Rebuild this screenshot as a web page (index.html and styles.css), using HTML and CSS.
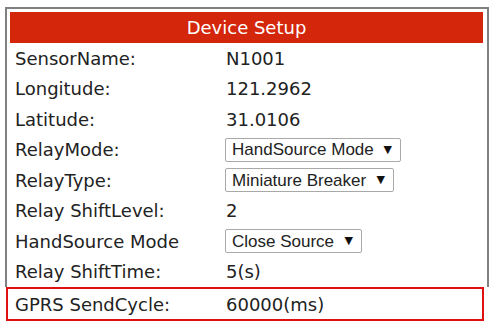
FILE: index.html
```html
<!DOCTYPE html>
<html lang="en">
<head>
  <meta charset="UTF-8" />
  <title>Device Setup</title>
  <link rel="stylesheet" href="styles.css">
</head>
<body>
  <div class="setup">
    <div class="setup__head">Device Setup</div>
    <div class="setup__row">
      <span class="setup__label">SensorName:</span>
      <span class="setup__value">N1001</span>
    </div>
    <div class="setup__row">
      <span class="setup__label">Longitude:</span>
      <span class="setup__value">121.2962</span>
    </div>
    <div class="setup__row">
      <span class="setup__label">Latitude:</span>
      <span class="setup__value">31.0106</span>
    </div>
    <div class="setup__row">
      <span class="setup__label">RelayMode:</span>
      <span class="setup__value">
        <span class="picker">
          <select class="picker__select">
            <option>HandSource Mode</option>
          </select>
        </span>
      </span>
    </div>
    <div class="setup__row">
      <span class="setup__label">RelayType:</span>
      <span class="setup__value">
        <span class="picker">
          <select class="picker__select">
            <option>Miniature Breaker</option>
          </select>
        </span>
      </span>
    </div>
    <div class="setup__row">
      <span class="setup__label">Relay ShiftLevel:</span>
      <span class="setup__value">2</span>
    </div>
    <div class="setup__row">
      <span class="setup__label">HandSource Mode</span>
      <span class="setup__value">
        <span class="picker">
          <select class="picker__select">
            <option>Close Source</option>
          </select>
        </span>
      </span>
    </div>
    <div class="setup__row">
      <span class="setup__label">Relay ShiftTime:</span>
      <span class="setup__value">5(s)</span>
    </div>
  </div>
  <!-- marked row -->
  <div class="setup__row setup__row--marked">
    <span class="setup__label">GPRS SendCycle:</span>
    <span class="setup__value">60000(ms)</span>
  </div>
</body>
</html>
```

FILE: styles.css
```css
body {
  margin: 0;
  background: #fff;
  color: #222;
  font-family: 'DejaVu Sans', Verdana, sans-serif;
  font-size: 18px;
}
.setup {
  margin: 7px 0 0 5px;
  width: 473px;
  padding: 3px 4px 0 3px;
  border: 2px solid #808080;
  border-bottom: none;
}
.setup__head {
  height: 31px;
  display: flex;
  align-items: center;
  justify-content: center;
  background: #d4260a;
  color: #fff;
  font-size: 18px;
}
.setup__row {
  height: 30.5px;
  display: flex;
  align-items: center;
  padding-left: 5px;
}
.setup__label {
  width: 211px;
}
.setup__value {
  display: flex;
  align-items: center;
}
/* the last row sits in a red frame */
.setup__row--marked {
  margin-left: 6px;
  width: 467px;
  height: 29px;
  padding-left: 7px;
  border: 2px solid #e01010;
  padding-top: 1px;
}
.setup__row--marked .setup__label {
  width: 211px;
}
.picker {
  position: relative;
  display: inline-block;
  margin-left: -1px;
}
.picker__select {
  -webkit-appearance: none;
  appearance: none;
  height: 24px;
  padding: 0 26px 0 6px;
  border: 1px solid #a9a9a9;
  border-radius: 2px;
  background: #fff;
  color: #222;
  font-family: 'Liberation Sans', Arial, sans-serif;
  font-size: 17px;
}
.picker::after {
  content: '\25BC';
  position: absolute;
  right: 9px;
  top: 5px;
  font-size: 11px;
  color: #111;
  pointer-events: none;
}
```
